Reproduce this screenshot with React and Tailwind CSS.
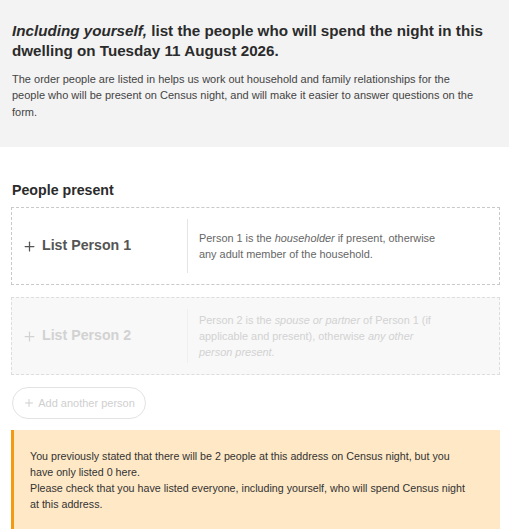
import { Plus } from "lucide-react";

const font = { fontFamily: '"Liberation Sans", Arial, sans-serif' };

function PersonCard({ label, faded, children }) {
  return (
    <div
      className={`flex h-[78px] border border-dashed ${
        faded ? "border-[#dddddd] bg-[#f8f8f8] text-[#d2d2d2]" : "border-[#c9c9c9] bg-white text-[#555]"
      }`}
    >
      <div className="flex w-[175px] shrink-0 items-center gap-[5px] pl-[10px]">
        <Plus size={15} strokeWidth={2} />
        <span className="text-[14.2px] font-bold">{label}</span>
      </div>
      <div className={`my-[11px] w-px ${faded ? "bg-[#efefef]" : "bg-[#e4e4e4]"}`}></div>
      <div className={`flex items-center pl-[11px] text-[10.9px] leading-[16.3px] ${faded ? "" : "text-[#666]"}`}>
        <p className="max-w-[246px]">{children}</p>
      </div>
    </div>
  );
}

export default function App() {
  return (
    <div style={font} className="min-h-screen bg-white text-[#333]">
      {/* Question header */}
      <section className="h-[147px] bg-[#f3f3f3] px-3 pt-[21px]">
        <h1 className="text-[15.2px] font-bold leading-[20px] text-[#2b2b2b]">
          <em>Including yourself,</em> list the people who will spend the night in this dwelling on
          Tuesday 11 August 2026.
        </h1>
        <p className="mt-[10px] text-[11px] leading-[16.4px] text-[#444]">
          The order people are listed in helps us work out household and family relationships for the
          <br />
          people who will be present on Census night, and will make it easier to answer questions on the
          <br />
          form.
        </p>
      </section>

      {/* People list */}
      <section className="pl-[11px] pr-[9px] pt-[33px]">
        <h2 className="pl-px text-[14.2px] font-bold leading-[20px] text-[#2b2b2b]">People present</h2>

        <div className="mt-[7px] flex flex-col gap-3">
          <PersonCard label="List Person 1">
            Person 1 is the <em>householder</em> if present, otherwise any adult member of the household.
          </PersonCard>
          <PersonCard label="List Person 2" faded>
            Person 2 is the <em>spouse or partner</em> of Person 1 (if applicable and present), otherwise{" "}
            <em>any other person present.</em>
          </PersonCard>
        </div>

        <button className="ml-px mt-3 flex h-[32px] w-[134px] items-center justify-center gap-[3px] rounded-full border border-[#e3e3e3] text-[11px] text-[#cfcfcf]">
          <Plus size={12} strokeWidth={2} />
          Add another person
        </button>

        <div className="mt-[11px] border-l-[3px] border-[#f39a12] bg-[#fee8c6] pb-[17px] pl-4 pr-2 pt-[18px] text-[10.7px] leading-[16px] text-[#333]">
          <p>
            You previously stated that there will be 2 people at this address on Census night, but you
            <br />
            have only listed 0 here.
          </p>
          <p>
            Please check that you have listed everyone, including yourself, who will spend Census night
            <br />
            at this address.
          </p>
        </div>
      </section>
    </div>
  );
}
